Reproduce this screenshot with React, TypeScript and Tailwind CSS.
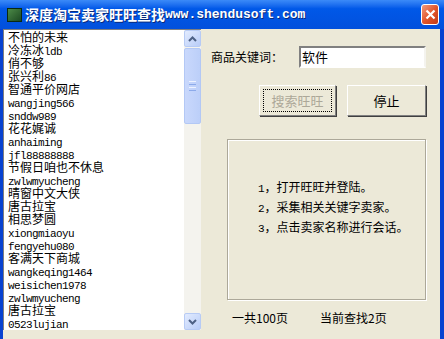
import React from "react";

const CJK = '"Noto Sans CJK SC", "Noto Sans", sans-serif';
const MONO = '"Liberation Mono", "DejaVu Sans Mono", monospace';

const sellers = [
  "不怕的未来",
  "冷冻冰ldb",
  "俏不够",
  "张兴利86",
  "智通平价网店",
  "wangjing566",
  "snddw989",
  "花花娓诚",
  "anhaiming",
  "jfl88888888",
  "节假日咱也不休息",
  "zwlwmyucheng",
  "晴窗中文大侠",
  "唐古拉宝",
  "相思梦圆",
  "xiongmiaoyu",
  "fengyehu080",
  "客满天下商城",
  "wangkeqing1464",
  "weisichen1978",
  "zwlwmyucheng",
  "唐古拉宝",
  "0523lujian",
];

// splits a string into CJK and ascii runs so ascii gets the narrow mono look
function Mixed({
  text,
  cjkClass,
  latinClass,
}: {
  text: string;
  cjkClass: string;
  latinClass: string;
}) {
  const parts = text.split(/([\u0000-\u007f]+)/).filter((p) => p !== "");
  return (
    <>
      {parts.map((p, i) =>
        /^[\u0000-\u007f]+$/.test(p) ? (
          <span key={i} className={latinClass} style={{ fontFamily: MONO }}>
            {p}
          </span>
        ) : (
          <span key={i} className={cjkClass} style={{ fontFamily: CJK }}>
            {p}
          </span>
        )
      )}
    </>
  );
}

function ScrollArrow({ up }: { up?: boolean }) {
  return (
    <div className="flex h-[17px] w-[17px] items-center justify-center rounded-[2px] border border-[#b7cbf5] bg-gradient-to-br from-[#e2ebfe] to-[#b9cdf8]">
      <svg width="9" height="6" viewBox="0 0 9 6">
        <path
          d={up ? "M1 5 L4.5 1.5 L8 5" : "M1 1 L4.5 4.5 L8 1"}
          stroke="#4d6185"
          strokeWidth="2"
          fill="none"
        />
      </svg>
    </div>
  );
}

export default function App() {
  return (
    <div className="flex h-[339px] w-[444px] flex-col overflow-hidden bg-[#0842d0]">
      {/* title bar */}
      <div className="flex h-[29px] items-center bg-gradient-to-b from-[#3b8af8] via-[#0058e8] via-30% to-[#0250dc] pl-[7px] pr-[5px]">
        <div className="h-[14px] w-[15px] border border-[#0b2a10] bg-gradient-to-br from-[#4c8a48] to-[#1d4a22]" />
        <div className="ml-[3px] flex items-center whitespace-nowrap text-white [text-shadow:1px_1px_0_#0a2a7a]">
          <span className="text-[14px] font-bold" style={{ fontFamily: CJK }}>
            深度淘宝卖家旺旺查找
          </span>
          <span className="text-[13px] font-bold" style={{ fontFamily: MONO }}>
            www.shendusoft.com
          </span>
        </div>
        <div className="ml-auto flex h-[21px] w-[18px] items-center justify-center rounded-[3px] border border-white bg-gradient-to-br from-[#f09a7c] via-[#e2562c] to-[#c23a14]">
          <svg width="11" height="11" viewBox="0 0 11 11">
            <path d="M1.5 1.5 L9.5 9.5 M9.5 1.5 L1.5 9.5" stroke="white" strokeWidth="2.2" />
          </svg>
        </div>
      </div>

      {/* client area */}
      <div className="ml-[3px] mr-[4px] flex flex-1 bg-[#ece9d8]">
        {/* list box */}
        <div className="flex h-[301px] w-[198px] border-t border-l border-[#7f7f7f] bg-white">
          <div className="flex flex-1 flex-col pl-[4px]">
            {sellers.map((s, i) => (
              <div key={i} className="h-[13px] whitespace-nowrap leading-[13px] text-black">
                <Mixed text={s} cjkClass="text-[12px]" latinClass="text-[11px] tracking-[-0.6px]" />
              </div>
            ))}
          </div>
          <div className="flex w-[17px] flex-col bg-[#f4f3ee]">
            <ScrollArrow up />
            <div className="mt-[1px] flex h-[76px] flex-col items-center justify-center gap-[2px] rounded-[2px] border border-[#b3c8f5] bg-gradient-to-r from-[#c9d8fc] to-[#bccff9]">
              <div className="h-px w-[7px] bg-[#eef3ff]" />
              <div className="h-px w-[7px] bg-[#8caaea]" />
              <div className="h-px w-[7px] bg-[#eef3ff]" />
              <div className="h-px w-[7px] bg-[#8caaea]" />
            </div>
            <div className="flex-1" />
            <ScrollArrow />
          </div>
        </div>

        {/* right panel */}
        <div className="flex flex-1 flex-col text-[12px] text-black" style={{ fontFamily: CJK }}>
          <div className="ml-[10px] mt-[17px] flex h-[22px] items-center">
            <span className="w-[88px]">商品关键词：</span>
            <div className="flex h-[22px] w-[127px] items-center border-2 border-t-[#808080] border-l-[#808080] border-b-white border-r-[#f4f3ee] bg-white pl-[1px]">
              <span className="text-[13px]">软件</span>
            </div>
          </div>

          <div className="ml-[58px] mt-[17px] flex gap-[11px]">
            <div className="flex h-[31px] w-[77px] items-center justify-center border border-t-white border-l-white border-b-[#808080] border-r-[#808080] p-[3px] shadow-[1px_1px_0_#404040]">
              <div className="flex h-full w-full items-center justify-center border border-dotted border-black text-[13px] text-[#aca899]">
                搜索旺旺
              </div>
            </div>
            <div className="flex h-[31px] w-[79px] items-center justify-center border border-t-white border-l-white border-b-[#808080] border-r-[#808080] text-[13px] shadow-[1px_1px_0_#404040]">
              停止
            </div>
          </div>

          <div className="ml-[26px] mt-[23px] flex h-[161px] w-[199px] flex-col gap-[4px] border border-[#aca899] pl-[30px] pt-[39px] shadow-[inset_1px_1px_0_white,1px_1px_0_white]">
            {["1，打开旺旺并登陆。", "2，采集相关关键字卖家。", "3，点击卖家名称进行会话。"].map((t) => (
              <div key={t} className="h-[16px] whitespace-nowrap leading-[16px]">
                <Mixed text={t} cjkClass="text-[12px]" latinClass="text-[11px]" />
              </div>
            ))}
          </div>

          <div className="ml-[31px] mt-[10px] flex h-[16px] items-center whitespace-nowrap">
            <span className="w-[88px]">一共100页</span>
            <span>当前查找2页</span>
          </div>
        </div>
      </div>
    </div>
  );
}
